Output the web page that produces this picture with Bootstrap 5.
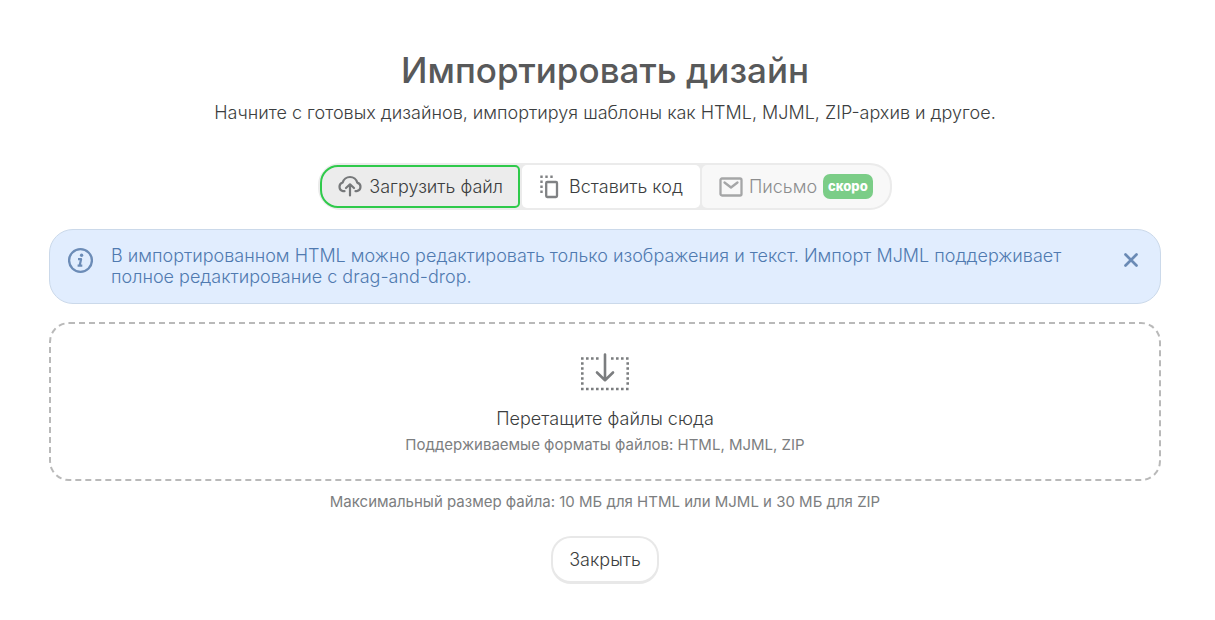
<!DOCTYPE html>
<html lang="ru">
<head>
<meta charset="utf-8">
<meta name="viewport" content="width=device-width, initial-scale=1">
<title>Импортировать дизайн</title>
<link href="https://cdn.jsdelivr.net/npm/bootstrap@5.3.0/dist/css/bootstrap.min.css" rel="stylesheet">
<style>
body{font-family:Inter,"Liberation Sans",sans-serif;color:#3c3e40;font-size:18px;line-height:22px;font-weight:300;background:#fff}
.import-page{padding:48px 54px 36px 49px}
h1{font-size:35px;line-height:44px;font-weight:500;color:#58595a}
.intro{margin:10px 0 39px}
.source-tabs{background:#ebebeb;border:2px solid #ebebeb;border-radius:22px;height:47px;gap:2px}
.source-tabs .btn{font-size:18px;line-height:22px;font-weight:300;padding:0 17px;color:#3c3e40;background:#fff;border:0;border-radius:5px;gap:6px}
.source-tabs .btn.active{color:#3c3e40;background:#ececec;border:2px solid #2fca4b;border-radius:18px 5px 5px 18px;padding:0 15px}
.source-tabs .btn:disabled{background:#f8f8f8;color:#8c8d8e;opacity:1;border-radius:5px 20px 20px 5px}
.soon{background:#7bcd87;color:#fff;font-size:13px;line-height:25px;font-weight:800;border-radius:7px;padding:0 5px}
.note{background:#e1edfe;border:1px solid #cbd9ea;border-radius:24px;color:#6c8cb7;line-height:21px;padding:15px 18px 16px;margin-top:19px;gap:18px}
.note-text{color:#507ab0}
.note-close{color:#6a8ab5;line-height:0;padding:8px 4px 0}
.drop{border:2px dashed #b9b9b9;border-radius:20px;margin-top:18px;padding:28px 16px 24px}
.drop-title{margin:16px 0 5px}
.hint{font-size:15px;line-height:20px;font-weight:400;color:#7c7e80}
.limit{margin:11px 0 24px}
.close-btn{border:2px solid #e8e8e8;border-bottom-width:3px;border-radius:20px;font-size:18px;line-height:22px;font-weight:300;padding:11px 16px 10px;color:#3c3e40}
</style>
</head>
<body>
<main class="import-page text-center">
<h1 class="m-0">Импортировать дизайн</h1>
<p class="intro">Начните с готовых дизайнов, импортируя шаблоны как HTML, MJML, ZIP-архив и другое.</p>
<div class="d-flex justify-content-center">
<div class="source-tabs d-flex" role="group" aria-label="Источник">
<button type="button" class="btn active d-flex align-items-center"><svg width="26" height="24" viewBox="0 0 26 24" fill="none" stroke="#76787a" stroke-width="2.2" stroke-linecap="round" stroke-linejoin="round"><path d="M7.500 16.200H6a4.500 4.500 0 0 1-.3-8.700C6.500 4.300 9.600 2 13 2c3.500 0 6.500 2.400 7.200 5.600a4.400 4.400 0 0 1-.4 8.600H18.500M13 20.500V9.500M9 13l4-3.700 4 3.700"/></svg>Загрузить файл</button>
<button type="button" class="btn d-flex align-items-center"><svg class="me-1" width="20" height="26" viewBox="0 0 20 26" fill="none" stroke="#808284"><rect x="7.200" y="8" width="10.800" height="15" rx="1" stroke-width="2.300"/><path stroke-width="2.400" stroke-dasharray="2.400 2.600" d="M1.300 2.700h13M2.500 6.500v13"/></svg>Вставить код</button>
<button type="button" class="btn d-flex align-items-center" disabled><svg width="24" height="20" viewBox="0 0 24 20" fill="none" stroke="#a5a6a7" stroke-width="2.300" stroke-linecap="round" stroke-linejoin="round"><rect x="1.500" y="1.500" width="21" height="17" rx="1.500"/><path d="m5.500 5.500 6.500 5 6.500-5"/></svg>Письмо <span class="soon">скоро</span></button>
</div>
</div>
<div class="note d-flex align-items-start text-start" role="note">
<svg class="flex-shrink-0" width="25" height="30" viewBox="0 0 25 30" fill="none" stroke="currentColor"><circle cx="12.500" cy="15.500" r="11.400" stroke-width="2.300"/><circle cx="13.600" cy="10.300" r="1.700" fill="currentColor" stroke="none"/><path stroke-width="2.200" stroke-linejoin="round" d="M10 14.200h3.100L11.600 20.700h2.700M9.600 20.700h2"/></svg>
<div class="note-text flex-grow-1">В импортированном HTML можно редактировать только изображения и текст. Импорт MJML поддерживает полное редактирование с drag-and-drop.</div>
<button type="button" class="note-close btn border-0" aria-label="Скрыть"><svg width="14" height="14" viewBox="0 0 14 14" stroke="currentColor" stroke-width="2.700" stroke-linecap="round"><path d="m1.500 1.500 11 11m0-11-11 11"/></svg></button>
</div>
<div class="drop">
<svg class="d-block mx-auto" width="50" height="40" viewBox="0 0 50 40" fill="none" stroke="#7b7d7f"><path stroke-width="2.600" stroke-dasharray="2.600 2.400" d="M1 6.500h18M31 6.500h18M2.300 10.200v24M47.700 10.200v24M1 37h48"/><path stroke-width="2.600" stroke-linecap="round" stroke-linejoin="round" d="M25 2.500v25.500M17 20.500l8 7.700 8-7.700"/></svg>
<div class="drop-title">Перетащите файлы сюда</div><div class="hint">Поддерживаемые форматы файлов: HTML, MJML, ZIP</div></div>
<p class="hint limit">Максимальный размер файла: 10 МБ для HTML или MJML и 30 МБ для ZIP</p>
<button type="button" class="btn close-btn">Закрыть</button>
</main>
<script src="https://cdn.jsdelivr.net/npm/bootstrap@5.3.0/dist/js/bootstrap.bundle.min.js"></script>
</body>
</html>
